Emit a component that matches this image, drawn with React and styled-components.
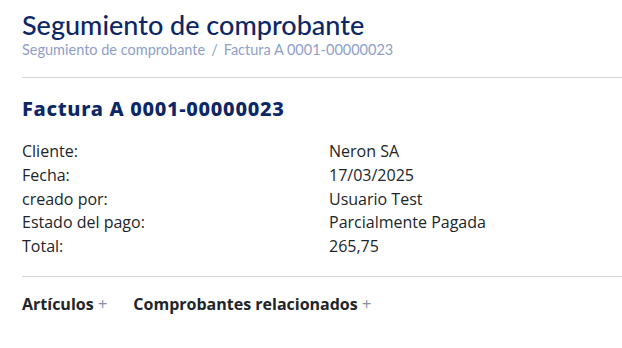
import React from "react";
import styled, { createGlobalStyle } from "styled-components";

const Global = createGlobalStyle`
  html, body { margin: 0; padding: 0; background: #ffffff; }
  body { font-family: "Open Sans", "Noto Sans", sans-serif; color: #212529; }
`;

const Page = styled.div`
  padding: 9px 0 0 22px;
`;

const Header = styled.header`
  display: flex;
  flex-direction: column;
  padding-bottom: 19px;
  border-bottom: 1px solid #d4d4d4;
`;

const Title = styled.h1`
  margin: 0;
  font-family: Lato, "Noto Sans", sans-serif;
  font-weight: 500;
  font-size: 27px;
  line-height: 32px;
  color: #0d2766;
`;

const Crumbs = styled.nav`
  display: flex;
  gap: 6px;
  font-family: Lato, "Noto Sans", sans-serif;
  font-size: 14.5px;
  line-height: 17px;
  color: #8ea0c7;
`;

const Card = styled.section`
  display: flex;
  flex-direction: column;
  padding: 18px 0 0;
`;

const Heading = styled.h2`
  margin: 0 0 18px;
  font-family: "Noto Sans", sans-serif;
  font-weight: 800;
  font-size: 20px;
  line-height: 26px;
  letter-spacing: 0.7px;
  color: #0d2766;
`;

const Details = styled.dl`
  display: grid;
  grid-template-columns: 307px 1fr;
  margin: 0;
  padding-bottom: 17px;
  border-bottom: 1px solid #d4d4d4;
  font-size: 16px;
  line-height: 23.75px;
  color: #212529;
`;

const Term = styled.dt`
  margin: 0;
`;

const Value = styled.dd`
  margin: 0;
`;

const Tabs = styled.div`
  display: flex;
  gap: 26px;
  padding-top: 16px;
`;

const Tab = styled.button`
  display: flex;
  align-items: center;
  gap: 4px;
  padding: 0;
  border: 0;
  background: none;
  font-family: "Open Sans", sans-serif;
  font-weight: 700;
  font-size: 16px;
  line-height: 22px;
  color: #212529;
  cursor: pointer;
`;

const Plus = styled.span`
  font-weight: 400;
  font-size: 17px;
  color: #8592a6;
`;

const rows = [
  ["Cliente:", "Neron SA"],
  ["Fecha:", "17/03/2025"],
  ["creado por:", "Usuario Test"],
  ["Estado del pago:", "Parcialmente Pagada"],
  ["Total:", "265,75"],
];

export default function App() {
  return (
    <Page>
      <Global />
      <Header>
        <Title>Segumiento de comprobante</Title>
        <Crumbs>
          <span>Segumiento de comprobante</span>
          <span>/</span>
          <span>Factura A 0001-00000023</span>
        </Crumbs>
      </Header>
      <Card>
        <Heading>Factura A 0001-00000023</Heading>
        <Details>
          {rows.map(([k, v]) => (
            <React.Fragment key={k}>
              <Term>{k}</Term>
              <Value>{v}</Value>
            </React.Fragment>
          ))}
        </Details>
        <Tabs>
          <Tab>Artículos<Plus>+</Plus></Tab>
          <Tab>Comprobantes relacionados<Plus>+</Plus></Tab>
        </Tabs>
      </Card>
    </Page>
  );
}
